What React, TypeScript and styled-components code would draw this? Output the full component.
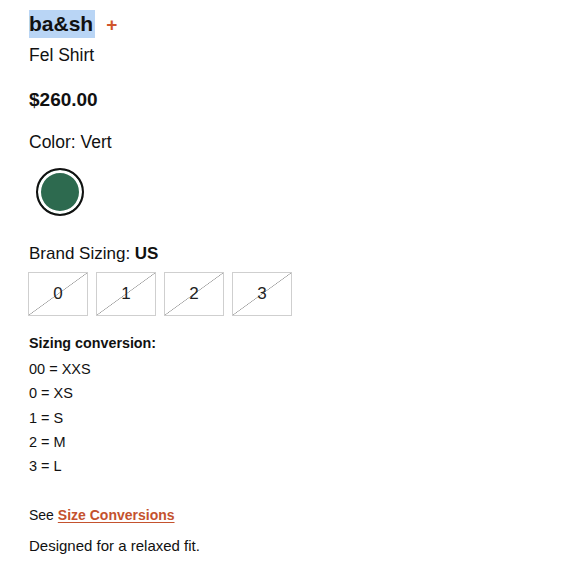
import styled, { createGlobalStyle } from "styled-components";

const GlobalStyle = createGlobalStyle`
  html, body {
    margin: 0;
    padding: 0;
    background: #fff;
  }
  body {
    font-family: "Liberation Sans", Arial, sans-serif;
    color: #111;
  }
`;

const SIZES = ["0", "1", "2", "3"];

const CONVERSIONS = ["00 = XXS", "0 = XS", "1 = S", "2 = M", "3 = L"];

export default function App() {
  return (
    <>
      <GlobalStyle />
      <Page>
        <BrandRow>
          <Brand>ba&amp;sh</Brand>
          <Plus>+</Plus>
        </BrandRow>
        <ProductName>Fel Shirt</ProductName>
        <Price>$260.00</Price>
        <Label>Color: Vert</Label>
        <Swatch $color="#2d6a4f" />
        <SizingLabel>
          Brand Sizing: <strong>US</strong>
        </SizingLabel>
        <SizeGrid>
          {SIZES.map((s) => (
            <SizeBox key={s}>{s}</SizeBox>
          ))}
        </SizeGrid>
        <ConversionTitle>Sizing conversion:</ConversionTitle>
        <ConversionList>
          {CONVERSIONS.map((c) => (
            <ConversionLine key={c}>{c}</ConversionLine>
          ))}
        </ConversionList>
        <SeeLine>
          See <LinkText href="#">Size Conversions</LinkText>
        </SeeLine>
        <FitNote>Designed for a relaxed fit.</FitNote>
      </Page>
    </>
  );
}

const Page = styled.div`
  padding: 10px 28px 0 29px;
  display: flex;
  flex-direction: column;
  align-items: flex-start;
`;

const BrandRow = styled.div`
  display: flex;
  align-items: center;
  gap: 11px;
  height: 28px;
`;

const Brand = styled.span`
  font-size: 21px;
  font-weight: 700;
  background: #b9d5f5;
  padding: 1px 2px 1px 0;
  line-height: 26px;
`;

const Plus = styled.span`
  color: #d0552c;
  font-size: 19px;
  font-weight: 700;
  line-height: 1;
`;

const ProductName = styled.div`
  font-size: 17.5px;
  margin-top: 5px;
  line-height: 24px;
`;

const Price = styled.div`
  font-size: 19px;
  font-weight: 700;
  margin-top: 22px;
  line-height: 22px;
`;

const Label = styled.div`
  font-size: 17.5px;
  margin-top: 20px;
  line-height: 22px;
`;

const Swatch = styled.div<{ $color: string }>`
  width: 44px;
  height: 44px;
  border: 2px solid #111;
  border-radius: 50%;
  margin: 15px 0 0 7px;
  box-sizing: content-box;
  background: ${(p) => p.$color};
  box-shadow: inset 0 0 0 3px #fff;
`;

const SizingLabel = styled.div`
  font-size: 17px;
  margin-top: 27px;
  line-height: 22px;

  strong {
    font-weight: 700;
  }
`;

const SizeGrid = styled.div`
  display: grid;
  grid-template-columns: repeat(4, 60px);
  gap: 8px;
  margin-top: 7px;
  margin-left: -1px;
`;

const SizeBox = styled.div`
  height: 44px;
  box-sizing: border-box;
  border: 1px solid #cfcfcf;
  display: flex;
  align-items: center;
  justify-content: center;
  font-size: 17px;
  color: #222;
  background: linear-gradient(
    to bottom right,
    transparent calc(50% - 0.6px),
    #9a9a9a 50%,
    transparent calc(50% + 0.6px)
  );
`;

const ConversionTitle = styled.div`
  font-size: 14.3px;
  font-weight: 700;
  margin-top: 17px;
  line-height: 20px;
`;

const ConversionList = styled.div`
  display: flex;
  flex-direction: column;
  margin-top: 4px;
`;

const ConversionLine = styled.div`
  font-size: 14.5px;
  line-height: 24.3px;
`;

const SeeLine = styled.div`
  font-size: 14px;
  margin-top: 27px;
  line-height: 20px;
`;

const LinkText = styled.a`
  color: #c4522e;
  font-weight: 700;
  text-decoration: underline;
  text-underline-offset: 2px;
`;

const FitNote = styled.div`
  font-size: 15px;
  margin-top: 11px;
  line-height: 20px;
`;
